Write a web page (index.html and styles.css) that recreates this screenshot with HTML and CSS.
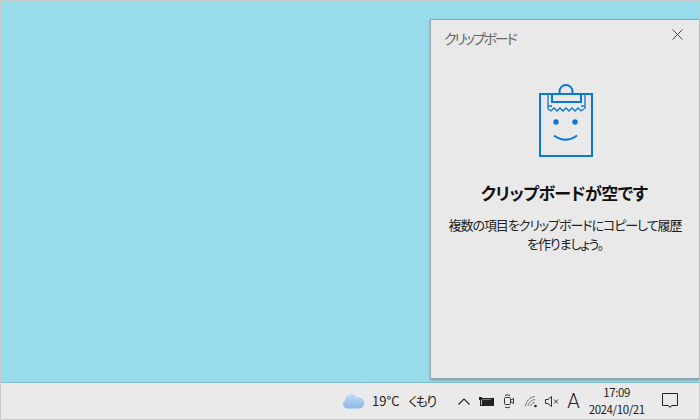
FILE: index.html
```html
<!DOCTYPE html>
<html lang="ja">
<head>
  <meta charset="UTF-8">
  <meta name="viewport" content="width=device-width, initial-scale=1.0">
  <title>クリップボード</title>
  <link rel="stylesheet" href="styles.css">
</head>
<body>
  <div class="screen">
    <div class="desktop">
      <div class="panel">
        <div class="panelHead">
          <span class="panelTitle">クリップボード</span>
          <svg class="closeIcon" width="11" height="11" viewBox="0 0 11 11">
            <path d="M0.5 0.5L10.5 10.5M10.5 0.5L0.5 10.5" fill="none" stroke="#444" stroke-width="1"/>
          </svg>
        </div>
        <div class="emptyBox">
          <svg class="clipIcon" width="54" height="74" viewBox="0 0 54 74">
            <g fill="none" stroke="#0b78d7" stroke-width="2">
              <rect x="1" y="10" width="52" height="62"/>
              <path d="M20.5 10V7.5A6.5 6.5 0 0 1 33.5 7.5V10"/>
              <path d="M13 10V18H42V10"/>
            </g>
            <g fill="none" stroke="#0b78d7" stroke-width="1.3">
              <path d="M9 11V25M46 11V25M9 22H13M46 22H42"/>
              <path d="M9 25l3 2 3-3 3 3 3-3 3 3 3-3 3 3 3-3 3 3 3-3 3 3 3-2"/>
            </g>
            <circle cx="17" cy="38" r="2.7" fill="#0b78d7"/>
            <circle cx="36" cy="38" r="2.7" fill="#0b78d7"/>
            <path d="M15 51.5Q26.5 60 38 51.5" fill="none" stroke="#0b78d7" stroke-width="2"/>
          </svg>
          <h1 class="emptyTitle">クリップボードが空です</h1>
          <p class="emptyText">複数の項目をクリップボードにコピーして履歴<br>を作りましょう。</p>
        </div>
      </div>
    </div>
    <div class="taskbar">
      <svg class="cloudIcon" width="23" height="16" viewBox="0 0 23 16">
        <defs>
          <linearGradient id="cloudFill" x1="0" y1="0" x2="0" y2="1">
            <stop offset="0" stop-color="#bcd8f5"/>
            <stop offset="1" stop-color="#8fb8e8"/>
          </linearGradient>
        </defs>
        <path d="M5 15.5A4.5 4.5 0 0 1 3.2 7.2 6 6 0 0 1 14.5 4.6 5.5 5.5 0 0 1 18.5 15.5Z" fill="url(#cloudFill)"/>
      </svg>
      <span class="weather">19°C</span>
      <span class="weather weatherWord">くもり</span>
      <svg class="chevron" width="12" height="7" viewBox="0 0 12 7">
        <path d="M0.5 6.5L6 1L11.5 6.5" fill="none" stroke="#222" stroke-width="1.1"/>
      </svg>
      <svg class="battery" width="15" height="9" viewBox="0 0 15 9">
        <path d="M0 0H3V1H15V9H1V3H0Z" fill="#222"/>
        <rect x="2" y="3" width="1" height="5" fill="#bbb"/>
        <rect x="3" y="2" width="9" height="1" fill="#777"/>
      </svg>
      <svg class="meet" width="11" height="15" viewBox="0 0 11 15">
        <rect x="1.5" y="3.5" width="6" height="7" rx="1" fill="none" stroke="#333"/>
        <path d="M8 6L10.5 4.5V9.5L8 8" fill="none" stroke="#333"/>
        <path d="M2 1.5Q4.5 0 7 1.5M2 13Q4.5 14.5 7 13" stroke="#333" fill="none"/>
      </svg>
      <svg class="wifi" width="13" height="13" viewBox="0 0 13 13">
        <g fill="none" stroke="#444" stroke-dasharray="1.3 0.5">
          <path d="M0.5 11A11 11 0 0 1 10 1.5"/>
          <path d="M3 11A8 8 0 0 1 10 4.5"/>
          <path d="M5.5 11A5 5 0 0 1 10 7.5"/>
        </g>
        <circle cx="10.5" cy="11" r="1.3" fill="#222"/>
      </svg>
      <svg class="speaker" width="14" height="11" viewBox="0 0 14 11">
        <path d="M0.5 3.5H3L6.5 0.5V10.5L3 7.5H0.5Z" fill="none" stroke="#333"/>
        <path d="M9 3.5L13 7.5M13 3.5L9 7.5" fill="none" stroke="#333"/>
      </svg>
      <span class="ime">A</span>
      <div class="clock">
        <span>17:09</span>
        <span>2024/10/21</span>
      </div>
      <svg class="notify" width="16" height="16" viewBox="0 0 16 16">
        <path d="M0.5 0.5H15.5V12.5H9.5L8 14.5L6.5 12.5H0.5Z" fill="none" stroke="#222"/>
      </svg>
    </div>
  </div>
</body>
</html>
```

FILE: styles.css
```css
*{
  box-sizing: border-box;
}
body{
  margin: 0;
  background-color: #c9c9c9;
  font-family: "Noto Sans CJK JP", "Noto Sans", sans-serif;
  font-feature-settings: "palt";
}
.screen{
  width: 700px;
  height: 420px;
  border: 1px solid #c9c9c9;
  display: flex;
  flex-direction: column;
}
/* デスクトップ */
.desktop{
  flex: 1;
  background-color: #98dbeb;
  display: flex;
  justify-content: flex-end;
  padding: 18px 0 4px 0;
  box-shadow: inset 0 -1px 0 #7fbccb;
}
.panel{
  width: 269px;
  background-color: #e9e9e9;
  border: 1px solid #9aa8ac;
  border-right: none;
  box-shadow: 0 1px 2px rgba(0,0,0,0.3);
}
.panelHead{
  display: flex;
  justify-content: space-between;
  padding: 8px 16px 0 13px;
  height: 64px;
}
.panelTitle{
  font-size: 14px;
  line-height: 20px;
  letter-spacing: -2.1px;
  color: #666;
}
.closeIcon{
  margin-top: 1px;
}
.emptyBox{
  display: flex;
  flex-direction: column;
  align-items: center;
}
.clipIcon{
  display: block;
  margin-left: 2px;
}
.emptyTitle{
  margin: 23px 2px 0 0;
  font-size: 17px;
  line-height: 24px;
  font-weight: 700;
  letter-spacing: -0.55px;
  color: #111;
}
.emptyText{
  margin: 10px 0 0 0;
  font-size: 13px;
  line-height: 19px;
  letter-spacing: -1.05px;
  color: #222;
  text-align: center;
}
/* タスクバー */
.taskbar{
  height: 36px;
  background-color: #eaeaea;
  display: flex;
  align-items: center;
  padding-left: 341px;
  font-size: 13px;
  color: #222;
}
.cloudIcon{
  margin-right: 7px;
}
.weather{
  line-height: 18px;
}
.weatherWord{
  margin-left: 9px;
  letter-spacing: -1.8px;
}
.chevron{
  margin-left: 23px;
}
.battery{
  margin-left: 9px;
}
.meet{
  margin-left: 9px;
}
.wifi{
  margin-left: 11px;
}
.speaker{
  margin-left: 7px;
}
.ime{
  margin-left: 8px;
  font-size: 20px;
  font-weight: 300;
  line-height: 24px;
  font-family: "Roboto", sans-serif;
}
.clock{
  width: 66px;
  margin-left: 4px;
  display: flex;
  flex-direction: column;
  align-items: center;
  font-size: 11.5px;
  line-height: 17px;
  letter-spacing: -0.4px;
}
.notify{
  margin-left: 12px;
}
```
